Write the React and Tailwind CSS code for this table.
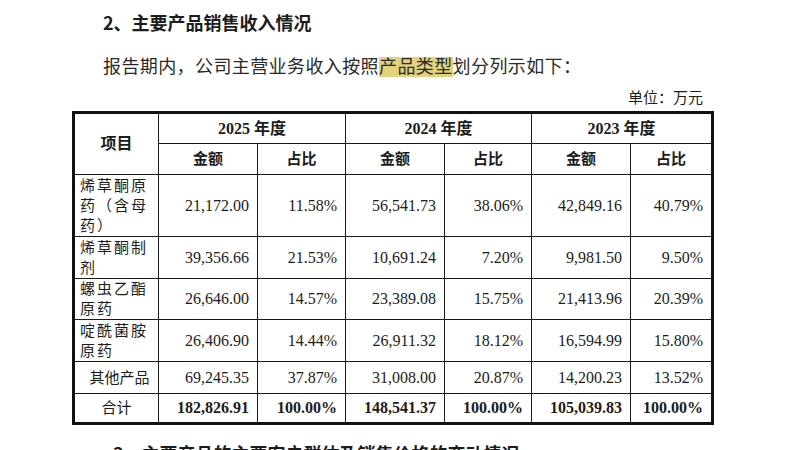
import React from "react"

const rows = [
  { label: ["烯草酮原", "药（含母", "药）"], h: "h-[62px]", v: ["21,172.00", "11.58%", "56,541.73", "38.06%", "42,849.16", "40.79%"] },
  { label: ["烯草酮制", "剂"], h: "h-[42px]", v: ["39,356.66", "21.53%", "10,691.24", "7.20%", "9,981.50", "9.50%"] },
  { label: ["螺虫乙酯", "原药"], h: "h-[41px]", v: ["26,646.00", "14.57%", "23,389.08", "15.75%", "21,413.96", "20.39%"] },
  { label: ["啶酰菌胺", "原药"], h: "h-[42px]", v: ["26,406.90", "14.44%", "26,911.32", "18.12%", "16,594.99", "15.80%"] },
]

const other = ["69,245.35", "37.87%", "31,008.00", "20.87%", "14,200.23", "13.52%"]
const total = ["182,826.91", "100.00%", "148,541.37", "100.00%", "105,039.83", "100.00%"]

const cell = "border border-[#1a1a1a] p-0"
const num = "border border-[#1a1a1a] p-0 pr-[8px] text-right align-middle leading-[20px]"

export default function App() {
  return (
    <div className="w-[800px] h-[450px] overflow-hidden bg-white text-[#1c1c1c] font-['Liberation_Serif','Noto_Sans_CJK_SC',serif]">
      <div className="pl-[103px] pt-[10px] text-[18px] leading-[24px] font-bold font-['Noto_Sans_CJK_SC',sans-serif]">
        2、主要产品销售收入情况
      </div>
      <div className="pl-[103px] mt-[21px] text-[18px] leading-[24px] tracking-[0.4px] text-[#2a2a2a]">
        报告期内，公司主营业务收入按照<span className="bg-[#e2d27c]">产品类型</span>划分列示如下：
      </div>
      <div className="mt-[9px] pr-[97px] text-right text-[15px] leading-[20px]">单位：万元</div>

      <table className="ml-[72px] mt-[3px] table-fixed border-collapse border-[3px] border-[#111] w-[639px] text-[16px]">
        <colgroup>
          <col className="w-[85px]" />
          <col className="w-[99px]" />
          <col className="w-[88px]" />
          <col className="w-[99px]" />
          <col className="w-[87px]" />
          <col className="w-[99px]" />
          <col className="w-[82px]" />
        </colgroup>
        <thead>
          <tr className="h-[31px] font-bold leading-[20px]">
            <th rowSpan={2} className={`${cell} text-[16px]`}>项目</th>
            <th colSpan={2} className={cell}>2025 年度</th>
            <th colSpan={2} className={cell}>2024 年度</th>
            <th colSpan={2} className={cell}>2023 年度</th>
          </tr>
          <tr className="h-[31px] text-[15px] font-bold leading-[20px]">
            <th className={cell}>金额</th>
            <th className={cell}>占比</th>
            <th className={cell}>金额</th>
            <th className={cell}>占比</th>
            <th className={cell}>金额</th>
            <th className={cell}>占比</th>
          </tr>
        </thead>
        <tbody>
          {rows.map((r) => (
            <tr key={r.label[0]} className={r.h}>
              <td className={`${cell} pl-[5px] text-[15px] leading-[20px] tracking-[2px] align-middle`}>
                {r.label.map((l) => (
                  <div key={l}>{l}</div>
                ))}
              </td>
              {r.v.map((x, i) => (
                <td key={i} className={num}>{x}</td>
              ))}
            </tr>
          ))}
          <tr className="h-[32px]">
            <td className={`${cell} pl-[6px] text-[15px] leading-[20px] text-center`}>其他产品</td>
            {other.map((x, i) => (
              <td key={i} className={num}>{x}</td>
            ))}
          </tr>
          <tr className="h-[30px]">
            <td className={`${cell} text-[15px] leading-[20px] text-center`}>合计</td>
            {total.map((x, i) => (
              <td key={i} className={`${num} font-bold`}>{x}</td>
            ))}
          </tr>
        </tbody>
      </table>

      <div className="pl-[113px] mt-[16px] text-[18px] leading-[24px] font-bold font-['Noto_Sans_CJK_SC',sans-serif]">
        3、主要产品的主要客户群体及销售价格的变动情况
      </div>
    </div>
  )
}
